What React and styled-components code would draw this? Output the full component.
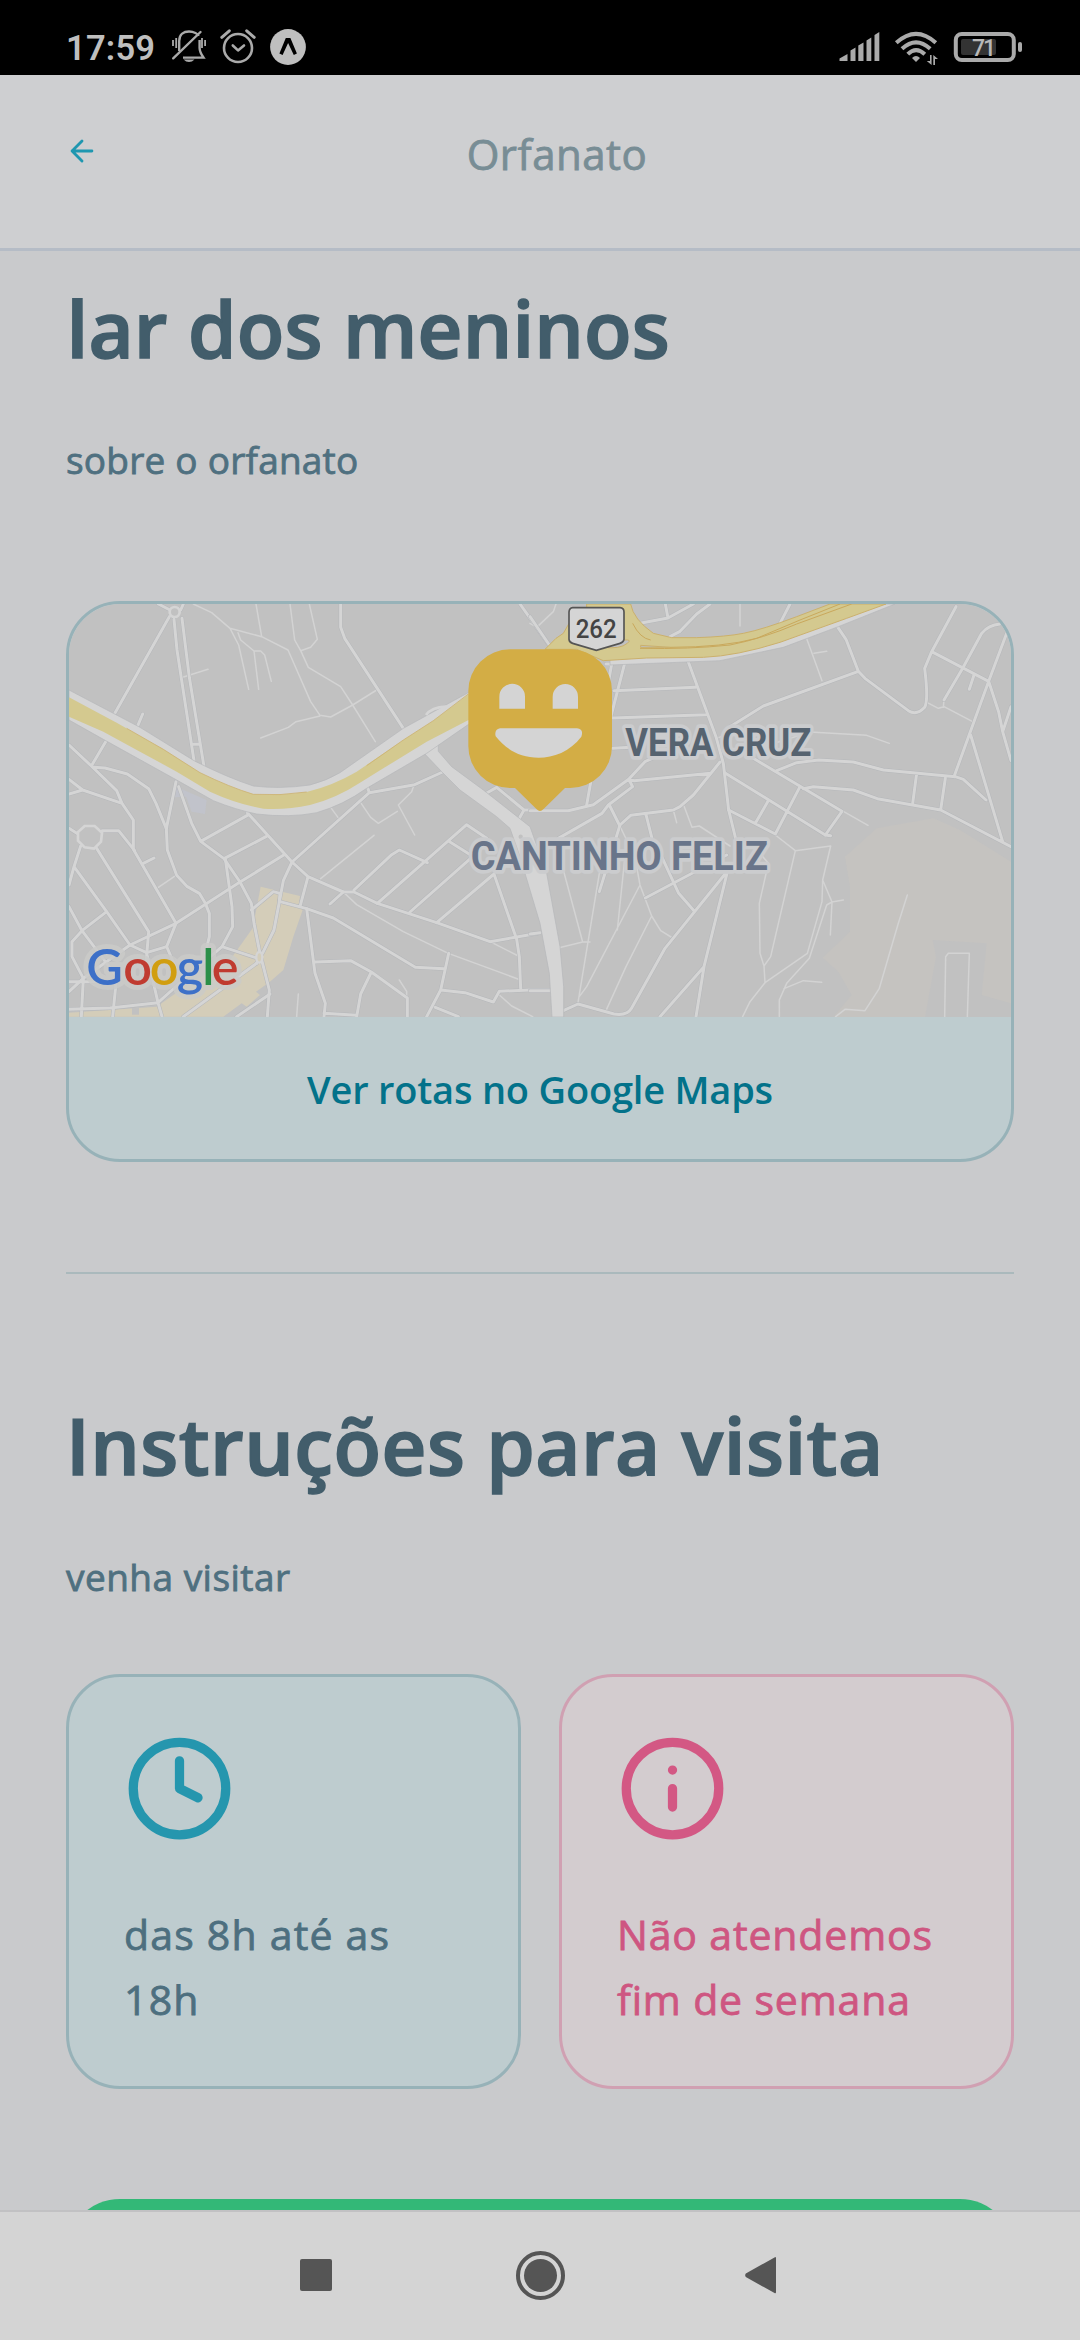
import React from "react";
import styled, { createGlobalStyle } from "styled-components";

const GlobalStyle = createGlobalStyle`
  *, *::before, *::after { box-sizing: border-box; }
  html, body { margin: 0; padding: 0; background: #c9cacc; }
  body { font-family: "Open Sans", "Noto Sans", sans-serif; }
  h1, h2, p { margin: 0; }
`;

const Screen = styled.div`
  display: flex;
  flex-direction: column;
  width: 1080px;
  height: 2340px;
  overflow: hidden;
  background: #c9cacc;
`;

const StatusBar = styled.div`
  display: flex;
  justify-content: space-between;
  align-items: flex-start;
  flex: none;
  height: 75px;
  padding: 28px 57px 0 66px;
  background: #000;
  color: #bfbfbf;
`;

const StatusGroup = styled.div`
  display: flex;
  align-items: flex-start;
  gap: ${(p) => p.$gap}px;
`;

const Clock = styled.span`
  width: 91px;
  font: 600 34.5px/40px Roboto, sans-serif;
  letter-spacing: 0.2px;
  white-space: nowrap;
`;

const Header = styled.header`
  display: grid;
  grid-template-columns: 120px 1fr 86px;
  flex: none;
  height: 176px;
  padding: 0 0 22px;
  border-bottom: 3px solid #b5bcc6;
  background: #cecfd1;
`;

const BackButton = styled.button`
  display: flex;
  align-items: center;
  padding: 1px 0 0 65px;
  border: 0;
  background: none;
  color: #1f97b0;
`;

const HeaderTitle = styled.div`
  align-self: center;
  padding-top: 6px;
  color: #788d95;
  font-size: 42px;
  line-height: 56px;
  text-align: center;
  letter-spacing: ${(p) => p.$spacing}px;
  -webkit-text-stroke: 0.8px #788d95;
`;

const Content = styled.main`
  display: flex;
  flex-direction: column;
  flex: none;
  height: 1959px;
  padding: 29px 66px 0;
  overflow: hidden;
`;

const Title = styled.h1`
  margin-left: ${(p) => p.$shift || 0}px;
  color: #425d6b;
  font-size: 78px;
  font-weight: 600;
  line-height: 96px;
  letter-spacing: ${(p) => p.$spacing}px;
  white-space: nowrap;
  -webkit-text-stroke: 1.6px #425d6b;
`;

const Description = styled.p`
  margin-top: 54px;
  color: #4f7080;
  font-size: 37px;
  line-height: 60px;
  letter-spacing: ${(p) => p.$spacing}px;
  -webkit-text-stroke: 0.8px #4f7080;
`;

const MapCard = styled.section`
  display: flex;
  flex-direction: column;
  flex: none;
  height: 561px;
  margin-top: 111px;
  border: 3px solid #97b2b8;
  border-radius: 54px;
  background: #becccf;
  overflow: hidden;
`;

const MapView = styled.svg`
  display: block;
  flex: none;
  width: 942px;
  height: 413px;
`;

const RoutesLink = styled.div`
  display: flex;
  flex: 1;
  align-items: center;
  justify-content: center;
  padding-top: 2px;
  color: #03728a;
  font-size: 38px;
  font-weight: 600;
  letter-spacing: -0.2px;
`;

const Divider = styled.hr`
  flex: none;
  width: 100%;
  height: 2px;
  margin: 110px 0 123px;
  border: 0;
  background: #aab9bc;
`;

const Cards = styled.div`
  display: grid;
  flex: none;
  grid-template-columns: 455px 455px;
  justify-content: space-between;
  margin-top: 67px;
`;

const Card = styled.article`
  height: 415px;
  padding: 56px 45px 55px 55px;
  border: 3px solid ${(p) => (p.$pink ? "#d0a0b2" : "#97b2b8")};
  border-radius: 54px;
  background: ${(p) => (p.$pink ? "#d3cccf" : "#becccf")};
  color: ${(p) => (p.$pink ? "#d35884" : "#2596ae")};
`;

const CardText = styled.p`
  margin-top: 58px;
  color: ${(p) => (p.$pink ? "#ce5681" : "#4d6f7f")};
  font-size: 41px;
  line-height: 65px;
  letter-spacing: ${(p) => p.$spacing}px;
  white-space: nowrap;
  -webkit-text-stroke: 0.8px currentColor;
`;

const CardIcon = styled.svg`
  display: block;
  width: 111px;
  height: 111px;
  fill: none;
  stroke: currentColor;
  stroke-width: 2;
  stroke-linecap: round;
  stroke-linejoin: round;
`;

const WhatsappButton = styled.div`
  flex: none;
  height: 168px;
  margin-top: 110px;
  border-radius: 54px;
  background: #33b877;
`;

const NavBar = styled.nav`
  display: grid;
  grid-template-columns: 224px 224px 218px;
  justify-content: center;
  align-items: center;
  justify-items: center;
  flex: 1;
  padding: 0 6px 2px 0;
  border-top: 2px solid #c1c1c3;
  background: #d4d4d4;
`;

const RecentsIcon = styled.span`
  width: 32px;
  height: 32px;
  border-radius: 2px;
  background: #555;
`;

const HomeIcon = styled.span`
  display: grid;
  place-items: center;
  width: 49px;
  height: 49px;
  border: 4px solid #555;
  border-radius: 50%;
  &::after {
    content: "";
    width: 33px;
    height: 33px;
    border-radius: 50%;
    background: #555;
  }
`;

function BellOff() {
  return (
    <svg width="35" height="36" viewBox="170 29 35 36" fill="none" stroke="#aaa" strokeWidth="2.4">
      <path d="M178.2 52V42C178.2 35 183 32.5 188 32.5S197 35 197.5 37M198.6 41V49C198.6 53 200 55 202.5 58.6H182" />
      <path d="M172.2 59.3L199.5 33" strokeLinecap="round" />
      <path d="M182.5 60.5H193.5Q191 63 188 63T182.5 60.5Z" fill="#aaa" stroke="none" />
      <path d="M172 41V47M175.2 39V49M201 39V49M204.1 41V47" strokeWidth="1.8" />
    </svg>
  );
}

function Alarm() {
  return (
    <svg width="36" height="36" viewBox="221 29 36 36" fill="none" stroke="#aaa" strokeWidth="2.6" strokeLinecap="round" strokeLinejoin="round">
      <circle cx="239" cy="49" r="14" />
      <path d="M233.8 46.5L239 51.4L245 46.5" />
      <path d="M222.8 38.3L230.3 31.8M247.7 31.8L255.2 38.3" strokeWidth="3" />
    </svg>
  );
}

function ExpoMark() {
  return (
    <svg width="36" height="37" viewBox="271 28 36 37">
      <circle cx="289" cy="47" r="17.9" fill="#bfbfbf" />
      <path d="M280.4 53.6L286.8 38H291.4L297.9 53.6L294.8 55L289.1 43L283.6 55Z" fill="#000" />
    </svg>
  );
}

function Signal() {
  return (
    <svg width="41" height="36" viewBox="837.5 28 41 36" fill="#aaa">
      <path d="M838 61V58.5L846 54V61ZM849 61V50.5L854 47.5V61ZM856.8 61V45.5L862 42.5V61ZM865 61V40.5L869.8 37.5V61ZM873 61V35L877.8 32V61Z" />
    </svg>
  );
}

function Wifi() {
  return (
    <svg width="45" height="40" viewBox="893 28 45 40" fill="none" stroke="#aaa" strokeWidth="4">
      <path d="M895.3 42.8Q915 25 934.8 42.8M901 48.8Q915 35.8 929.2 48.8M906.8 54.2Q915 46 923.8 54.2" />
      <path d="M911 58Q915 54 919 58L915 62Z" fill="#aaa" stroke="none" />
      <path d="M925.8 61H929V55H930.6V65ZM937 59H934V65H932.3V55Z" fill="#aaa" stroke="none" />
    </svg>
  );
}

function Battery() {
  return (
    <svg width="70" height="36" viewBox="951 28 70 36">
      <rect x="953.8" y="34" width="58" height="26" rx="6" fill="none" stroke="#aaa" strokeWidth="4" />
      <rect x="959" y="39" width="35" height="16" rx="2" fill="#333" />
      <rect x="1016" y="42" width="4" height="10" rx="2" fill="#aaa" />
      <text x="970" y="56" fill="#b8b8b8" fontFamily="Roboto" fontWeight="500" fontSize="23" textLength="24">71</text>
    </svg>
  );
}

/* Road geometry, in thirds of a pixel; the east sheet starts 1440 units to the right. */
const WEST_ROADS = [
  "M358 80L192 374M360 60L325 42M392 60L400 42M372 88L381 180L432 512M396 85L418 262L462 530M430 463H448M262 410L278 372",
  "M872 42V112L884 145L1060 415M1410 42L1500 170",
  "M170 450L124 528L57 465M124 528L200 602L216 640L98 600L57 568M57 612L98 600M216 640L250 690V778L378 1000L350 1070L378 1135M132 532L165 534L232 552L296 596L318 640L349 716L352 780L380 856L412 890L448 910L466 940L478 970V1040L466 1090",
  "M378 575L349 716M386 590L425 700L452 754L522 806L570 876L604 940L612 1000L630 1090L658 1200L652 1280M452 754L596 674M522 806L648 740M592 668L726 816L774 860L880 906H912L982 940L1160 998L1320 1055L1465 1030M700 796L570 876L378 1000L240 1065L100 1165L57 1205M726 816L958 608L952 590M958 608L1094 584L1178 546M726 816L700 872L688 935L672 1020L640 1085L620 1120L400 1280M774 860L750 950M690 935L770 956L850 984L1096 1132L1182 1136",
  "M770 956L795 1150L826 1240L822 1280M795 1116L902 1112L964 1146L1072 1224V1280M964 1146L932 1212L920 1280M1196 1090L1172 1200L1130 1280M1172 1200L1245 1208L1330 1236L1348 1204L1440 1200H1500M822 1270L920 1276M1156 1252L1225 1280M840 942L880 906",
  "M912 900L1025 794L1048 780L1132 818M982 940L1250 704L1310 745M1080 966L1262 805M1160 998L1332 852M1200 756L1262 795M1332 852L1400 1048L1408 1100L1412 1195M1305 612L1340 592L1422 660L1405 690M1422 660H1470M350 1070L290 1088L240 1065",
  "M57 715L84 732M156 722L206 722L254 782M92 768L72 830L57 885M140 775L296 1025L288 1120M72 830L170 965L240 1065M57 950L96 1022L170 965M96 1022L66 1055V1100L100 1165L94 1280M96 1022L200 1160L188 1280M57 1175H200M57 1258L180 1254L324 1238L400 1170L516 1070L548 1010L546 950L526 806M324 1238L336 1280M290 1090L324 1238M280 820L312 804M516 1070L620 1104M604 960L670 905L690 910L688 935M660 1212L560 1280M632 1090L620 1120",
];
const WEST_PATHS = [
  "M430 42L485 68L540 115L566 165L596 298M540 115L635 140L714 180L782 335L810 376L842 381L908 345L980 300M564 128L572 150L612 183L626 298M612 183H632L644 195L664 274M618 42L635 140M720 42L734 150L752 182L775 232L872 290L908 345L976 455M778 42L802 148L782 172L752 182M398 262L474 238",
  "M325 892L378 856M812 866L972 736M880 906L920 944L1060 1025L1195 1090L1412 1170M932 638L962 682L985 700L1042 664M1090 590L1085 605L1045 645L1094 735M842 652L866 685M745 1212L740 1280M1048 1170L1070 1204V1224M1348 1215L1385 1248L1448 1280M1326 1058L1405 1098",
  "M632 444L715 412L738 395L810 378",
];
const EAST_ROADS = [
  "M0 80L58 165M406 42L414 84L490 42M330 100L414 84M420 140L450 124L500 72L540 42M780 42L750 100M228 222H245L170 645M284 220L240 390M252 302L496 292M248 384L528 374M472 208L558 440L580 520L596 660L618 750M248 475L330 470",
  "M600 410L700 348L985 244M918 104L948 148L985 244L1005 265L1135 362Q1160 378 1184 352Q1196 330 1184 235L1205 185L1278 50M1205 185L1376 274L1272 560M1430 130L1376 274L1406 366L1418 425L1443 512M1418 425L1443 350M1410 102Q1375 105 1355 130L1298 235L1242 330M1332 255L1318 298",
  "M0 662H115L190 644L296 568L345 515L400 490M296 568L312 572L542 550M296 568L308 590L235 645L216 670L85 745M570 516L490 615L450 650L430 660L302 676L270 705L208 905M238 645L268 705M348 674L366 745M584 548L886 735L936 664L665 502M740 542L800 518L866 510L970 516L1060 540L1276 560L1300 568L1368 630M820 596L850 590L970 600L1042 626L1232 660L1443 770M1160 550L1148 640M1246 565L1232 660M1322 435L1418 755M596 660L736 732L810 590M716 630L676 700",
  "M395 800L446 910L492 962M346 924L590 795M590 846L405 1075L305 1254Q292 1278 252 1272L144 1242L100 1262M592 846L522 1130L498 1280M522 1130L390 1280M0 1032L30 1028M0 1202H80M886 735L902 737",
];
const EAST_PATHS = [
  "M0 100L20 112L70 65L78 42M630 42V108M828 140L876 272M852 190L890 184M560 445L600 430L700 470L840 426L1010 436L1078 460M430 660L440 698M462 648L486 712L508 708L600 768M940 664L1014 706M1192 338L1225 355L1242 350L1328 395M1242 330L1240 352",
  "M268 705L290 750L262 1020M100 840L158 1056L75 1076M208 850L144 1238M158 1056H180M320 830L330 885L365 978L392 1022L428 1044M330 885L170 1190L148 1220M365 978L288 1130L228 1262M736 735L796 782L902 768L878 870L906 936L940 930M796 782L722 1100L702 1128L690 1090L688 940L715 820L690 790M878 870L876 935L832 1090L705 1178L660 1235L638 1280M702 1128L705 1178M906 936L890 945L838 1105L770 1180L748 1230V1280M906 936L901 1035M762 1196L820 1172L875 1177M1132 915L1105 1000L1048 1195L1005 1262L945 1258L917 1280M1244 1280L1247 1100L1255 1090H1318L1312 1280",
];

function RoadLayer({ roads, paths }) {
  return (
    <g fill="none" strokeLinejoin="round" strokeLinecap="round">
      {paths.map((d) => <path key={d} d={d} stroke="#d3d3d3" strokeWidth="4.5" />)}
      {roads.map((d) => <path key={"c" + d} d={d} stroke="#b5b7ba" strokeWidth="12" />)}
      {roads.map((d) => <path key={d} d={d} stroke="#d5d5d5" strokeWidth="9" />)}
    </g>
  );
}

const MapLabel = styled.text`
  font-family: Roboto, sans-serif;
  font-weight: 700;
  paint-order: stroke;
  stroke: #cbccce;
  stroke-width: 22px;
  stroke-linejoin: round;
`;

const LogoLetter = styled.tspan`
  fill: ${(p) => p.$color};
`;

function Logo(props) {
  return (
    <text y="1184" fontFamily="Lato, sans-serif" fontWeight="600" fontSize="151" {...props}>
      <LogoLetter x="109" $color="#3d70c8">G</LogoLetter>
      <LogoLetter x="220" $color="#c03b30">o</LogoLetter>
      <LogoLetter x="299" $color="#d19e10">o</LogoLetter>
      <LogoLetter x="380" $color="#3d70c8">g</LogoLetter>
      <LogoLetter x="457" $color="#2b8f49">l</LogoLetter>
      <LogoLetter x="485" $color="#c03b30">e</LogoLetter>
    </text>
  );
}

function StreetMap() {
  return (
    <MapView viewBox="57 42 2826 1239" preserveAspectRatio="none">
      <rect x="57" y="42" width="2826" height="1239" fill="#c1c1c1" />
      <path d="M632 890L750 918L745 950L758 960L730 1040L700 1140L660 1175L618 1205L630 1215L590 1250L575 1240L520 1280H57V1268L320 1250L420 1180L540 1110L608 1015Z" fill="#d4cdb9" />
      <path d="M246 1254H267V1274H246Z" fill="#c1c1c1" />
      <path d="M378 590L470 630L465 672L425 665L408 620L375 622Z" fill="#c1c3cb" />
      <path d="M2385 800L2480 715L2650 685L2730 720L2883 815V1281H2350L2405 1215L2365 1145L2318 1103L2400 1025V890Z" fill="#c5c3c0" />
      <path d="M2648 1050L2810 1060L2795 1215L2883 1240V1281H2625L2658 1100Z" fill="#c1c1c1" />

      <RoadLayer roads={WEST_ROADS} paths={WEST_PATHS} />
      <g transform="translate(1440 0)">
        <RoadLayer roads={EAST_ROADS} paths={EAST_PATHS} />
      </g>

      <g stroke="#b5b7ba" strokeWidth="2">
        <path d="M1118 485L1165 460V484L1205 530L1300 600L1440 710L1490 850L1530 1070L1541 1190V1281H1506L1498 1150L1470 1000L1410 800L1380 715L1340 680L1230 600L1175 545Z" fill="#d5d5d5" />
        <path d="M57 300L270 412L432 512Q530 562 610 588Q690 598 780 585Q830 572 870 548L1060 415L1260 305V400L1130 490L950 595Q880 645 800 668Q720 684 620 672Q560 660 490 632L380 570L160 448L57 390Z" fill="#d5d5d5" />
      </g>
      <circle cx="1412" cy="740" r="10" fill="#c1c1c1" stroke="#d5d5d5" strokeWidth="7" />
      <path d="M1128 375Q1145 352 1188 350" fill="none" stroke="#d5d5d5" strokeWidth="8" />
      <path d="M57 322L200 398L340 478L450 548Q540 592 610 613Q690 618 770 606Q850 586 920 545L1060 450L1150 392L1260 310V388L1130 455L1000 535L930 578Q860 624 780 645Q710 660 640 656Q560 642 480 605L380 545L270 485L160 425L57 380Z" fill="#d4c98f" />
      <path d="M230 415L340 478L450 548Q540 592 610 613Q690 618 770 606M950 527L1060 450L1150 392L1255 312" fill="none" stroke="#cdb271" strokeWidth="2.5" />

      <g transform="translate(1440 0)">
        <path d="M240 225L570 212L760 172L925 110L1095 42H1020L600 180L240 195Z" fill="#d5d5d5" stroke="#b5b7ba" strokeWidth="2" />
        <path d="M45 178L78 145L100 130L120 95L170 55V42H302Q310 88 370 130L425 143H500Q590 140 640 130Q700 118 800 80L900 42H1068L950 85L750 157Q620 198 520 202L350 204L220 212L140 178Z" fill="#d4c98f" stroke="#cbb06c" strokeWidth="3" />
        <path d="M220 172Q270 178 292 160Q306 148 285 150L220 165ZM332 166L420 172H332Z" fill="#c1c1c1" stroke="#cbb06c" strokeWidth="3" />
        <path d="M330 175Q480 178 600 165Q700 145 800 102L965 42M420 172Q580 172 680 145L810 90L930 42M308 100Q330 145 362 150" fill="none" stroke="#c9a85c" strokeWidth="3" />
      </g>

      <circle cx="374" cy="66" r="15" fill="#c1c1c1" stroke="#d5d5d5" strokeWidth="8" />
      <path d="M104 708H134L156 728L153 755L132 776L104 772L84 752V726Z" fill="#c1c1c1" stroke="#d5d5d5" strokeWidth="8" />
      <ellipse cx="628" cy="1102" rx="9" ry="16" fill="#d4cdb9" stroke="#d5d5d5" strokeWidth="7" />

      <path d="M1568 53H1710Q1722 54 1722 66V148Q1720 158 1710 160L1639 181L1568 160Q1558 157 1557 148V66Q1558 54 1568 53Z" fill="#d5d5d5" stroke="#555" strokeWidth="5" />
      <text x="1577" y="143" fontFamily="Roboto" fontWeight="500" fontSize="75" textLength="123" lengthAdjust="spacingAndGlyphs" fill="#444">262</text>

      <MapLabel x="1726" y="498" fontSize="114" textLength="558" lengthAdjust="spacingAndGlyphs" fill="#566370">VERA CRUZ</MapLabel>
      <MapLabel x="1262" y="839" fontSize="121" textLength="892" lengthAdjust="spacingAndGlyphs" fill="#69758a">CANTINHO FELIZ</MapLabel>

      <path d="M1380 178H1561A125 125 0 0 1 1686 303V469A125 125 0 0 1 1561 594H1545L1480 658Q1470 668 1460 658L1395 594H1380A125 125 0 0 1 1255 469V303A125 125 0 0 1 1380 178Z" fill="#d3ad45" />
      <path d="M1348 356V320A38 38 0 0 1 1425 320V356ZM1508 356V320A38 38 0 0 1 1584 320V356ZM1350 415H1581Q1602 417 1594 440C1560 485 1510 503 1466 503C1410 503 1368 478 1337 439Q1332 419 1350 415Z" fill="#d4d4d4" />

      <g stroke="#cbcbc9" strokeWidth="30" strokeLinejoin="round" opacity="0.8" aria-hidden="true">
        <Logo />
      </g>
      <Logo />
    </MapView>
  );
}

export default function App() {
  return (
    <Screen>
      <GlobalStyle />
      <StatusBar>
        <StatusGroup $gap={14}>
          <Clock>17:59</Clock>
          <BellOff />
          <Alarm />
          <ExpoMark />
        </StatusGroup>
        <StatusGroup $gap={14}>
          <Signal />
          <Wifi />
          <Battery />
        </StatusGroup>
      </StatusBar>

      <Header>
        <BackButton aria-label="Voltar">
          <svg width="34" height="34" viewBox="0 0 24 24" fill="none" stroke="currentColor" strokeWidth="2" strokeLinecap="round" strokeLinejoin="round">
            <path d="M19 12H5M12 19L5 12L12 5" />
          </svg>
        </BackButton>
        <HeaderTitle $spacing={0.5}>Orfanato</HeaderTitle>
      </Header>

      <Content>
        <Title $spacing={0.15} $shift={0.5}>lar dos meninos</Title>
        <Description $spacing={0.22}>sobre o orfanato</Description>

        <MapCard>
          <StreetMap />
          <RoutesLink>Ver rotas no Google Maps</RoutesLink>
        </MapCard>

        <Divider />

        <Title as="h2" $spacing={0.48}>Instruções para visita</Title>
        <Description $spacing={0.47}>venha visitar</Description>

        <Cards>
          <Card>
            <CardIcon viewBox="0 0 24 24">
              <circle cx="12" cy="12" r="10" />
              <path d="M12 6V12L16 14" />
            </CardIcon>
            <CardText $spacing={1.2}>das 8h até as<br />18h</CardText>
          </Card>
          <Card $pink>
            <CardIcon viewBox="0 0 24 24">
              <circle cx="12" cy="12" r="10" />
              <path d="M12 16V12M12 8H12.01" />
            </CardIcon>
            <CardText $pink $spacing={0.85}>Não atendemos<br />fim de semana</CardText>
          </Card>
        </Cards>

        <WhatsappButton />
      </Content>

      <NavBar>
        <RecentsIcon />
        <HomeIcon />
        <svg width="32" height="38" viewBox="745 2256 32 38" fill="#555">
          <path d="M774.5 2257.4Q776 2256.5 776 2258.5V2292Q776 2294 774.5 2293L745.8 2277Q744.5 2275.3 745.8 2273.5Z" />
        </svg>
      </NavBar>
    </Screen>
  );
}
